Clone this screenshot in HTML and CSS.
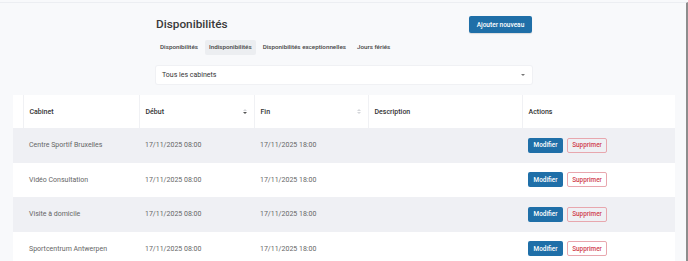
FILE: index.html
```html
<!DOCTYPE html>
<html lang="fr">
<head>
<meta charset="utf-8">
<title>Disponibilités</title>
<link rel="stylesheet" href="styles.css">
</head>
<body>
<div class="page">
  <div class="top">
    <div class="head">
      <h1 class="title">Disponibilités</h1>
      <button class="btn-primary">Ajouter nouveau</button>
    </div>
    <div class="tabs">
      <span class="tab">Disponibilités</span>
      <span class="tab active">Indisponibilités</span>
      <span class="tab">Disponibilités exceptionnelles</span>
      <span class="tab">Jours fériés</span>
    </div>
    <div class="select">
      <span>Tous les cabinets</span>
      <span class="caret"></span>
    </div>
  </div>
  <table class="grid">
    <colgroup>
      <col class="c0"><col class="c1"><col class="c2"><col class="c3"><col class="c4"><col class="c5">
    </colgroup>
    <thead>
      <tr>
        <th class="th-sel"></th>
        <th>Cabinet</th>
        <th><div class="th-sort"><span>Début</span><span class="sort"><i class="up"></i><i class="down dark"></i></span></div></th>
        <th><div class="th-sort"><span>Fin</span><span class="sort"><i class="up"></i><i class="down"></i></span></div></th>
        <th>Description</th>
        <th class="th-last">Actions</th>
      </tr>
    </thead>
    <tbody>
      <tr class="alt">
        <td></td><td>Centre Sportif Bruxelles</td><td>17/11/2025 08:00</td><td>17/11/2025 18:00</td><td></td>
        <td><div class="acts"><button class="btn-edit">Modifier</button><button class="btn-del">Supprimer</button></div></td>
      </tr>
      <tr>
        <td></td><td>Vidéo Consultation</td><td>17/11/2025 08:00</td><td>17/11/2025 18:00</td><td></td>
        <td><div class="acts"><button class="btn-edit">Modifier</button><button class="btn-del">Supprimer</button></div></td>
      </tr>
      <tr class="alt">
        <td></td><td>Visite à domicile</td><td>17/11/2025 08:00</td><td>17/11/2025 18:00</td><td></td>
        <td><div class="acts"><button class="btn-edit">Modifier</button><button class="btn-del">Supprimer</button></div></td>
      </tr>
      <tr>
        <td></td><td>Sportcentrum Antwerpen</td><td>17/11/2025 08:00</td><td>17/11/2025 18:00</td><td></td>
        <td><div class="acts"><button class="btn-edit">Modifier</button><button class="btn-del">Supprimer</button></div></td>
      </tr>
    </tbody>
  </table>
</div>
</body>
</html>
```
FILE: styles.css
```css
* { box-sizing: border-box; }
html, body { margin: 0; padding: 0; }
body {
  background: #f8f9fb;
  font-family: Roboto, "Liberation Sans", sans-serif;
  color: #333;
  overflow: hidden;
}
.page {
  width: 688px;
  height: 261px;
  margin-top: 2px;
  border-top: 1px solid #eceef2;
  border-right: 2px solid #8d8d8d;
}
.top {
  margin-left: 156px;
  width: 376px;
  padding-top: 13px;
}
.head {
  display: flex;
  justify-content: space-between;
  align-items: center;
  height: 17px;
}
.title {
  margin: 0;
  font-size: 11.8px;
  font-weight: 500;
  color: #3a3a3a;
  line-height: 17px;
}
.btn-primary {
  width: 63px;
  height: 17px;
  padding: 0;
  border: none;
  border-radius: 2px;
  background: #1f6fa8;
  color: #fff;
  font-family: inherit;
  font-size: 6.5px;
  font-weight: 500;
  box-shadow: 0 1px 1px rgba(0,0,0,0.12);
}
.tabs {
  display: flex;
  align-items: center;
  gap: 3px;
  margin-top: 7px;
  height: 15px;
}
.tab {
  font-size: 6.25px;
  font-weight: 500;
  color: #444;
  padding: 0 4px;
  height: 15px;
  line-height: 15px;
  border-radius: 2px;
}
.tab.active {
  background: #eceef1;
}
.select {
  margin-top: 11px;
  height: 18px;
  background: #fff;
  border-radius: 2px;
  box-shadow: 0 0 0 1px #f0f1f4;
  display: flex;
  align-items: center;
  justify-content: space-between;
  padding: 0 7px 0 6px;
  font-size: 7px;
  color: #333;
}
.caret {
  width: 0;
  height: 0;
  border-left: 2.5px solid transparent;
  border-right: 2.5px solid transparent;
  border-top: 2.5px solid #777;
}
.grid {
  margin: 11px 0 0 13px;
  width: 662px;
  border-collapse: collapse;
  table-layout: fixed;
  font-size: 7px;
}
.c0 { width: 10px; }
.c1 { width: 116px; }
.c2 { width: 115px; }
.c3 { width: 114px; }
.c4 { width: 154px; }
.c5 { width: 153px; }
thead tr { background: #fff; height: 33px; }
th {
  text-align: left;
  font-weight: 500;
  color: #333;
  padding: 0 6px;
  border-right: 1px solid #f0f1f4;
}
th.th-sel { padding: 0; }
th.th-last { border-right: none; }
.th-sort {
  display: flex;
  justify-content: space-between;
  align-items: center;
}
.sort {
  display: flex;
  flex-direction: column;
  gap: 1px;
  margin-right: 1px;
}
.sort i {
  display: block;
  width: 0;
  height: 0;
  border-left: 2px solid transparent;
  border-right: 2px solid transparent;
}
.sort .up { border-bottom: 2.5px solid #d4d6da; }
.sort .down { border-top: 2.5px solid #d4d6da; }
.sort .down.dark { border-top-color: #555; }
tbody tr { height: 34.5px; background: #fff; }
tbody tr.alt { background: #eff0f4; }
td {
  padding: 0 6px;
  color: #666;
  white-space: nowrap;
}
.acts {
  display: flex;
  gap: 4px;
}
.btn-edit, .btn-del {
  height: 15px;
  padding: 0;
  border-radius: 2px;
  font-family: inherit;
  font-size: 6.4px;
  font-weight: 500;
}
.btn-edit {
  width: 35px;
  background: #1f6fa8;
  color: #fff;
  border: none;
}
.btn-del {
  width: 40px;
  background: transparent;
  color: #d0404e;
  border: 1px solid #e8a7ae;
}
```
